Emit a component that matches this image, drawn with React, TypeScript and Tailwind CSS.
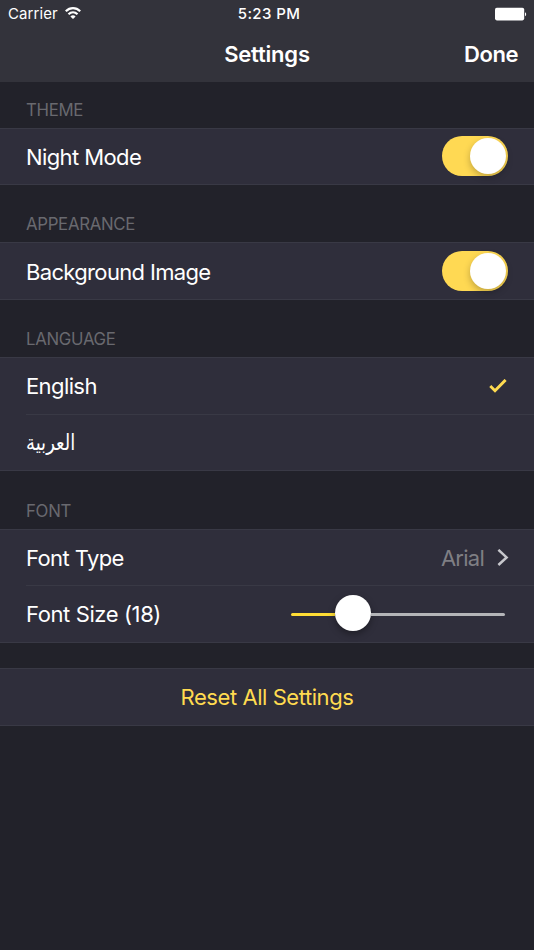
import { useState } from 'react';
import type { ReactNode } from 'react';

function StatusBar() {
  return (
    <div className="grid h-7 grid-cols-3 items-center pl-2 pr-[7px] text-[15px] leading-7">
      <div className="flex items-center gap-[7px]">
        <span className="tracking-[0.1px]">Carrier</span>
        <svg className="mb-[2px]" width="16" height="12" viewBox="0 0 16 12" fill="none" stroke="currentColor" strokeWidth="2.2">
          <path d="M0.8 4.3C5 0.1 11 0.1 15.2 4.3" />
          <path d="M3.5 7.3C6.1 4.8 9.9 4.8 12.5 7.3" />
          <path d="M8 12L5.4 9.4C7 8 9 8 10.6 9.4Z" fill="currentColor" stroke="none" />
        </svg>
      </div>
      <span className="pl-[3px] text-center font-medium tracking-[0.4px]">5:23 PM</span>
      <div className="flex items-center justify-end">
        <svg className="mb-px" width="32" height="14" viewBox="0 0 32 14" fill="currentColor">
          <rect x="0" y="0.8" width="29.2" height="12.6" rx="1.8" />
          <path d="M30 5.2C31.6 5.7 31.6 8.7 30 9.2Z" />
        </svg>
      </div>
    </div>
  );
}

function NavBar() {
  return (
    <div className="grid h-[53px] grid-cols-3 items-center text-[22px] font-semibold">
      <span className="col-start-2 text-center tracking-[-0.2px]">Settings</span>
      <span className="pr-4 text-right tracking-[-0.45px]">Done</span>
    </div>
  );
}

function SectionTitle({ children }: { children: ReactNode }) {
  return (
    <h2 className="flex h-full items-end pb-2 pl-[26px] text-[16.8px] leading-5 tracking-[-0.3px] text-[#69696f]">
      {children}
    </h2>
  );
}

function Toggle({ checked, onChange }: { checked: boolean; onChange: () => void }) {
  return (
    <button
      role="switch"
      aria-checked={checked}
      onClick={onChange}
      className={`flex h-10 w-[66px] items-center rounded-full p-[2px] ${
        checked ? 'justify-end bg-[#ffd953]' : 'justify-start bg-[#4a4a55]'
      }`}
    >
      <span className="size-9 rounded-full bg-white shadow-[0_3px_7px_rgba(0,0,0,0.25)]" />
    </button>
  );
}

export default function App() {
  const [nightMode, setNightMode] = useState(true);
  const [backgroundImage, setBackgroundImage] = useState(true);

  return (
    <div className="flex h-[950px] w-[534px] flex-col overflow-hidden bg-[#22222a] font-['Inter',sans-serif] text-white">
      <header className="h-[82px] bg-[#33333b]">
        <StatusBar />
        <NavBar />
      </header>

      {/* Theme */}
      <div className="h-[46px]">
        <SectionTitle>THEME</SectionTitle>
      </div>
      <div className="flex h-[57px] items-start justify-between border-y border-[#393945] bg-[#2f2e3b] px-[26px] pt-[7px] text-[22px]">
        <span className="pt-px leading-10 tracking-[-0.6px]">Night Mode</span>
        <Toggle checked={nightMode} onChange={() => setNightMode(!nightMode)} />
      </div>

      {/* Appearance */}
      <div className="h-[57px]">
        <SectionTitle>APPEARANCE</SectionTitle>
      </div>
      <div className="flex h-[58px] items-center justify-between border-y border-[#393945] bg-[#2f2e3b] px-[26px] text-[22px]">
        <span className="pt-[2px] tracking-[-0.66px]">Background Image</span>
        <Toggle checked={backgroundImage} onChange={() => setBackgroundImage(!backgroundImage)} />
      </div>

      {/* Language */}
      <div className="h-[57px]">
        <SectionTitle>LANGUAGE</SectionTitle>
      </div>
      <div className="h-[114px] border-y border-[#393945] bg-[#2f2e3b] pl-[26px] text-[22px]">
        <div className="flex h-[57px] items-center justify-between border-b border-[#393945] pr-[27px]">
          <span className="pt-px tracking-[-0.6px]">English</span>
          <svg width="18" height="15" viewBox="0 0 18 15" fill="none" stroke="#ffdb50" strokeWidth="2.9">
            <path d="M1.3 7L6 11.7L16.6 0.9" />
          </svg>
        </div>
        <div className="flex h-[55px] items-center">
          <span dir="rtl" className="origin-left scale-x-[0.82] font-['DejaVu_Sans',sans-serif] text-[22px]">العربية</span>
        </div>
      </div>

      {/* Font */}
      <div className="h-[58px]">
        <SectionTitle>FONT</SectionTitle>
      </div>
      <div className="h-[114px] border-y border-[#393945] bg-[#2f2e3b] pl-[26px] text-[22px]">
        <div className="flex h-14 items-center justify-between border-b border-[#393945] pr-[25px]">
          <span className="pt-[2px] tracking-[-0.6px]">Font Type</span>
          <div className="flex items-center gap-[13px] text-[#7f7f84]">
            <span className="pt-[2px] tracking-[-0.75px]">Arial</span>
            <svg width="12" height="18" viewBox="0 0 12 18" fill="none" stroke="#c7c7cc" strokeWidth="2.5">
              <path d="M1.4 0.8L9.6 8.4L1.4 16" />
            </svg>
          </div>
        </div>
        <div className="flex h-14 items-center justify-between pr-[29px]">
          <span className="pt-px tracking-[-0.4px]">Font Size (18)</span>
          <div className="flex h-9 w-[214px] items-center pt-px">
            <span className="h-[3px] w-[44px] rounded-l-full bg-[#ffdd35]" />
            <span className="mb-[3px] size-9 shrink-0 rounded-full bg-white shadow-[0_3px_7px_rgba(0,0,0,0.35)]" />
            <span className="h-[3px] flex-1 rounded-r-full bg-[#b4b5b8]" />
          </div>
        </div>
      </div>

      <button className="mt-[25px] h-[58px] border-y border-[#393945] bg-[#2f2e3b] text-[22px] tracking-[-0.44px] text-[#ffdb50]">
        Reset All Settings
      </button>
    </div>
  );
}
